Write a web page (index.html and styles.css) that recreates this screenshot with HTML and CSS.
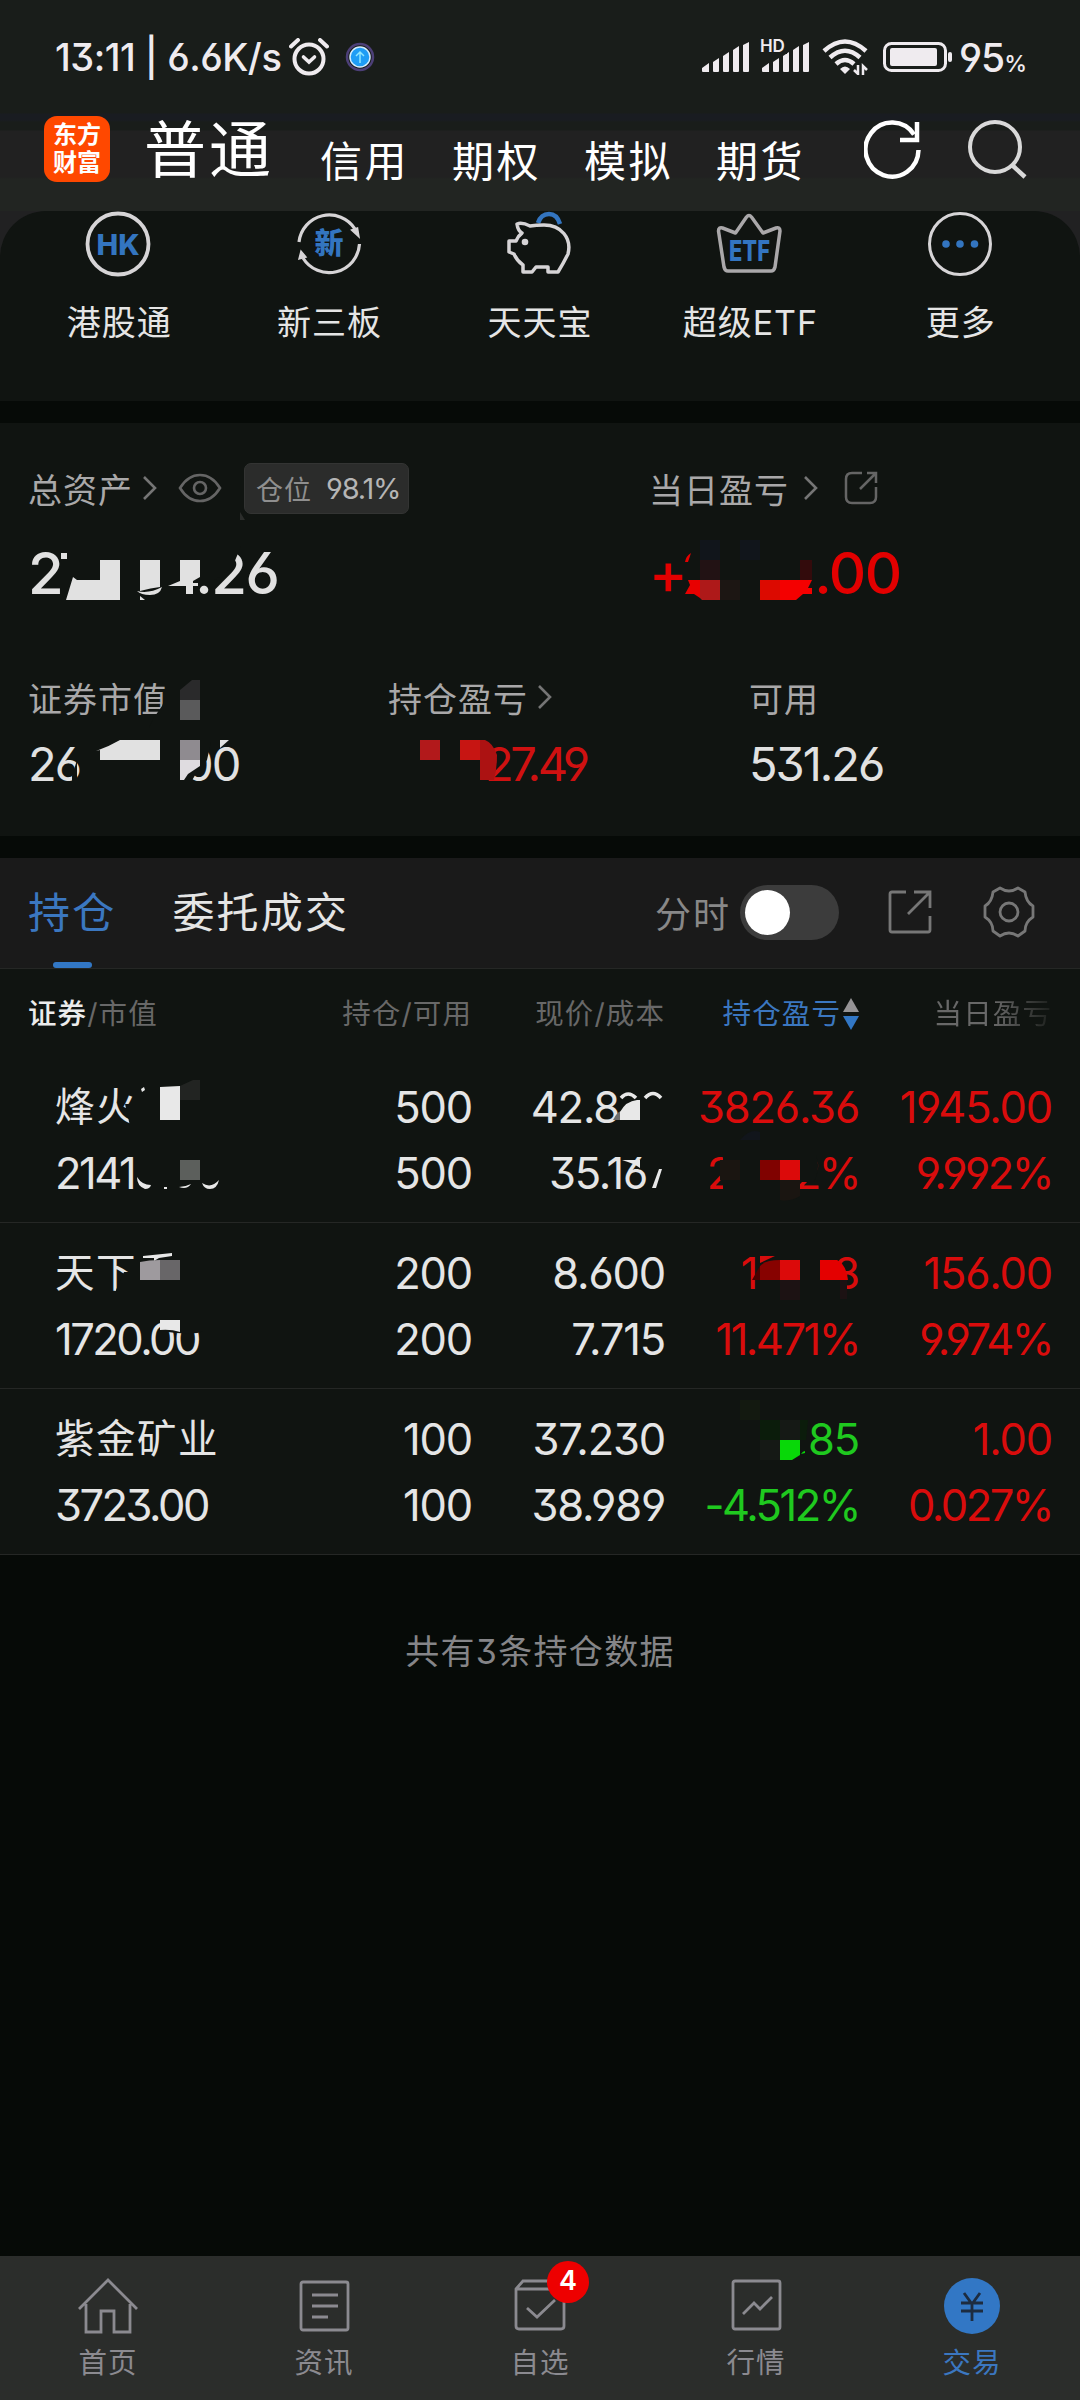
FILE: index.html
```html
<!DOCTYPE html>
<html lang="zh-CN">
  <head>
    <meta charset="UTF-8" />
    <meta name="viewport" content="width=device-width, initial-scale=1.0" />
    <title>交易</title>
    <link rel="stylesheet" href="styles.css">
  </head>

  <body>
    <div class="top">
      <div class="status-bar">
        <span class="status-time">13:11 | 6.6K/s</span>
        <svg class="alarm" width="40" height="38" viewBox="0 0 40 38" fill="none" stroke="#efebef" stroke-linecap="round">
          <circle cx="20" cy="21" r="14.500" stroke-width="4" />
          <path d="M14.500 19l5.500 5 5.500-5" stroke-width="3.600" />
          <path d="M2 8.500l7-6.500M38 8.500l-7-6.500" stroke-width="4" />
        </svg>
        <svg class="upload" width="30" height="32" viewBox="0 0 30 32" fill="none">
          <circle cx="15" cy="16" r="13" stroke="#4c3f77" stroke-width="2.500" />
          <circle cx="15" cy="16" r="10" fill="#1f9df5" stroke="#d6edff" stroke-width="1.500" />
          <path d="M15 22V11M11 15l4-4 4 4" stroke="#8fe6ff" stroke-width="1.500" />
        </svg>
        <div class="status-right">
          <svg width="48" height="32" viewBox="0 0 48 32" fill="#efebef">
            <path d="M0 27l7-5v9H1q-1 0-1-1zM11 21l6-4v13q0 1-1 1h-4q-1 0-1-1zM21 15l6-4v19q0 1-1 1h-4q-1 0-1-1zM31 9l6-4v25q0 1-1 1h-4q-1 0-1-1zM41 4l6-3v29q0 1-1 1h-4q-1 0-1-1z" />
          </svg>
          <div class="hd-signal">
            <span class="hd">HD</span>
            <svg width="48" height="32" viewBox="0 0 48 32" fill="#efebef">
              <path d="M0 27l7-5v9H1q-1 0-1-1zM11 21l6-4v13q0 1-1 1h-4q-1 0-1-1zM21 15l6-4v19q0 1-1 1h-4q-1 0-1-1zM31 9l6-4v25q0 1-1 1h-4q-1 0-1-1zM41 4l6-3v29q0 1-1 1h-4q-1 0-1-1z" />
            </svg>
          </div>
          <svg class="wifi" width="48" height="36" viewBox="0 0 48 36" fill="none" stroke="#efebef" stroke-width="4.500">
            <path d="M2 12Q23-7 44 12M8 18.500Q23 5 38 18.500M14 25Q23 17 32 25" />
            <path d="M23 35l-5-5q5-5 10 0z" fill="#efebef" stroke="none" />
            <path d="M36 26v9l-4-4M41 36v-9l4 4" stroke-width="2.500" />
          </svg>
          <svg class="battery" width="70" height="30" viewBox="0 0 70 30" fill="none">
            <rect x="1.500" y="1.500" width="61" height="27" rx="7" stroke="#efebef" stroke-width="3" />
            <rect x="7" y="6" width="47" height="18" rx="2" fill="#efebef" />
            <rect x="65" y="10" width="4" height="10" rx="2" fill="#efebef" />
          </svg>
          <span class="percent">95<small>%</small></span>
        </div>
      </div>

      <div class="header">
        <div class="logo"><span>东方</span><span>财富</span></div>
        <div class="account-tab active">普通</div>
        <div class="account-tab">信用</div>
        <div class="account-tab">期权</div>
        <div class="account-tab">模拟</div>
        <div class="account-tab">期货</div>
        <svg class="refresh" width="58" height="60" viewBox="0 0 58 60" fill="none" stroke="#fff" stroke-width="4.500">
          <path d="M54.500 31A26.500 27 0 1 1 50 15.500" />
          <path d="M53 3v18H36" />
        </svg>
        <svg width="60" height="60" viewBox="0 0 60 60" fill="none" stroke="#d9d9d9" stroke-width="4">
          <circle cx="27" cy="28" r="25" />
          <path d="M44 46l13 12" stroke-width="4.500" />
        </svg>
      </div>
    </div>

    <div class="shortcuts-wrap">
      <div class="shortcuts">
        <div class="shortcut">
          <svg width="66" height="66" viewBox="0 0 66 66">
            <circle cx="33" cy="33" r="30.500" fill="none" stroke="#d6d4d6" stroke-width="3.800" />
            <text x="33" y="43.500" class="icon-text" font-size="29">HK</text>
          </svg>
          <span>港股通</span>
        </div>
        <div class="shortcut">
          <svg width="66" height="66" viewBox="0 0 66 66" fill="none" stroke="#d6d4d6" stroke-width="3.200">
            <path d="M3 31A30.500 30.500 0 0 1 59 18M63.500 33A30.500 30.500 0 0 1 7 47" />
            <path d="M55.500 19l6-2 1.500 9zM3 48l2-8 5 6z" fill="#d6d4d6" stroke-width="1.500" />
            <text x="33" y="43" class="icon-text" font-size="29">新</text>
          </svg>
          <span>新三板</span>
        </div>
        <div class="shortcut">
          <svg width="66" height="66" viewBox="0 0 66 66" fill="none" stroke="#d6d4d6" stroke-width="3.500" stroke-linejoin="round">
            <path d="M32 12q3-9 11-9t11 10" stroke="#3375c0" stroke-width="4.500" />
            <path d="M24 15Q16 11 11 13q1 7 5 9-4 3-6 8H3v11l5 2q3 7 9 11v7h9l4-5h12v5h10q5-8 10-18C66 27 55 14 38 14q-8 0-14 1z" />
            <circle cx="19" cy="31" r="3.300" fill="#d6d4d6" stroke="none" />
          </svg>
          <span>天天宝</span>
        </div>
        <div class="shortcut">
          <svg width="66" height="66" viewBox="0 0 66 66" fill="none" stroke="#aaa8aa" stroke-width="3.500" stroke-linejoin="round">
            <path d="M8 56L2.500 20q0-4 4-3l13 5L30.500 6q2.500-3 5 0L47 22l13-5q4-1 4 3l-5 36q-1 4-4 4H12q-3 0-4-4z" />
            <text x="33.500" y="50" class="icon-text" textLength="41" lengthAdjust="spacingAndGlyphs" font-size="29">ETF</text>
          </svg>
          <span>超级ETF</span>
        </div>
        <div class="shortcut">
          <svg width="66" height="66" viewBox="0 0 66 66">
            <circle cx="33" cy="33" r="30.500" fill="none" stroke="#d6d4d6" stroke-width="3" />
            <g fill="#3375c0">
              <circle cx="19" cy="33" r="3.800" />
              <circle cx="33" cy="33" r="3.800" />
              <circle cx="47.500" cy="33" r="3.800" />
            </g>
          </svg>
          <span>更多</span>
        </div>
      </div>
    </div>

    <div class="assets">
      <div class="assets-main">
        <div class="asset-total">
          <div class="asset-label">
            总资产
            <svg class="chevron" width="15" height="24" viewBox="0 0 15 24"><path d="M2 1l11 11L2 23" /></svg>
            <svg class="eye" width="44" height="30" viewBox="0 0 44 30" fill="none" stroke="#656565" stroke-width="2.600">
              <path d="M2 15Q10 2 22 2t20 13Q34 28 22 28T2 15z" />
              <circle cx="22" cy="15" r="6" />
            </svg>
            <span class="position">仓位 <b>98.1%</b></span>
          </div>
          <div class="asset-big"><span>2</span><i class="gap gap-total"></i><span>.26</span></div>
        </div>
        <div class="asset-day">
          <div class="asset-label">
            当日盈亏
            <svg class="chevron" width="15" height="24" viewBox="0 0 15 24"><path d="M2 1l11 11L2 23" /></svg>
            <svg class="share-small" width="34" height="34" viewBox="0 0 34 34" fill="none" stroke="#656565" stroke-width="2.500">
              <path d="M18 2H8Q2 2 2 8v18q0 6 6 6h18q6 0 6-6V16" />
              <path d="M23 2h9v10M31 3L16 18" />
            </svg>
          </div>
          <div class="asset-big red"><span>+</span><i class="gap gap-day"></i><span>.00</span></div>
        </div>
      </div>
      <div class="assets-sub">
        <div>
          <div class="asset-label">证券市值</div>
          <div class="asset-value"><span>26</span><i class="gap gap-market"></i><span>00</span></div>
        </div>
        <div>
          <div class="asset-label">
            持仓盈亏
            <svg class="chevron" width="15" height="24" viewBox="0 0 15 24"><path d="M2 1l11 11L2 23" /></svg>
          </div>
          <div class="asset-value red"><i class="gap gap-profit"></i><span>27.49</span></div>
        </div>
        <div>
          <div class="asset-label">可用</div>
          <div class="asset-value available">531.26</div>
        </div>
      </div>
    </div>

    <div class="tabs">
      <div class="tab active">持仓</div>
      <div class="tab">委托成交</div>
      <div class="tab-tools">
        <span>分时</span>
        <div class="switch"></div>
        <svg class="share" width="44" height="44" viewBox="0 0 44 44" fill="none" stroke="#777" stroke-width="2.800">
          <path d="M18 2H4Q2 2 2 4v36q0 2 2 2h36q2 0 2-2V26" />
          <path d="M26 2h16v16M41 3L20 24" />
        </svg>
        <svg width="52" height="52" viewBox="0 0 52 52" fill="none" stroke="#777" stroke-width="2.800" stroke-linejoin="round">
          <path d="M17 2q9 6 18 0l7 4q1 10 8 14v11q-8 5-8 14l-7 5q-9-6-18 0l-7-5q0-9-8-14V20q7-4 8-14z" />
          <circle cx="26" cy="26" r="9" />
        </svg>
      </div>
    </div>

    <div class="table">
      <div class="row head">
        <div><em>证券</em>/市值</div>
        <div>持仓/可用</div>
        <div>现价/成本</div>
        <div class="sorted">
          持仓盈亏
          <svg width="16" height="34" viewBox="0 0 16 34"><path d="M8 1l8 14H0z" fill="#969496" /><path d="M8 33l8-14H0z" fill="#3277c5" /></svg>
        </div>
        <div class="fade">当日盈亏</div>
      </div>
      <div class="row">
        <div><p>烽火</p><p>2141</p></div>
        <div><p>500</p><p>500</p></div>
        <div><p>42.8<i class="gap gap-price"></i></p><p>35.16<i class="gap gap-cost"></i></p></div>
        <div class="red"><p>3826.36</p><p>2<i class="gap gap-rate"></i>2%</p></div>
        <div class="red"><p>1945.00</p><p>9.992%</p></div>
      </div>
      <div class="row">
        <div><p>天下</p><p>1720.00</p></div>
        <div><p>200</p><p>200</p></div>
        <div><p>8.600</p><p>7.715</p></div>
        <div class="red"><p>1<i class="gap gap-gain"></i>8</p><p>11.471%</p></div>
        <div class="red"><p>156.00</p><p>9.974%</p></div>
      </div>
      <div class="row">
        <div><p>紫金矿业</p><p>3723.00</p></div>
        <div><p>100</p><p>100</p></div>
        <div><p>37.230</p><p>38.989</p></div>
        <div class="green"><p>85</p><p>-4.512%</p></div>
        <div class="red"><p>1.00</p><p>0.027%</p></div>
      </div>
    </div>

    <div class="summary">共有3条持仓数据</div>

    <div class="nav">
      <div class="nav-item">
        <svg width="60" height="60" viewBox="0 0 60 60"><path d="M1 33L30 4l29 29M8 28v28h15V35h13v21h16V28" /></svg>
        <span>首页</span>
      </div>
      <div class="nav-item">
        <svg width="60" height="60" viewBox="0 0 60 60"><rect x="7" y="6" width="47" height="48" rx="2" /><path d="M18 19h26M18 30h26M18 41h16" /></svg>
        <span>资讯</span>
      </div>
      <div class="nav-item">
        <svg width="60" height="60" viewBox="0 0 60 60"><path d="M6 13l7-8h34l7 8v37q0 3-3 3H9q-3 0-3-3zM6 13h48M17 32l10 9 18-17" /></svg>
        <span>自选</span>
        <div class="badge">4</div>
      </div>
      <div class="nav-item">
        <svg width="60" height="60" viewBox="0 0 60 60"><rect x="7" y="5" width="47" height="48" rx="2" /><path d="M17 38l11-11 6 6 12-12" /></svg>
        <span>行情</span>
      </div>
      <div class="nav-item active">
        <svg width="60" height="60" viewBox="0 0 60 60"><circle cx="30" cy="30" r="28" /><path d="M22 17l8 11 8-11M19 27h22M19 35h22M30 27v18" /></svg>
        <span>交易</span>
      </div>
    </div>

    <!-- 隐私马赛克 -->
    <svg class="mosaic" width="1080" height="2400" viewBox="0 0 1080 2400">
      <!-- 资产 -->
      <g fill="#e1e1e1">
        <path fill="#101411" d="M212 546h29l-9 22-20 14z" />
        <path fill="#2b2d2b" d="M240 512l5 8h-5z" />
        <path d="M61 553h6v6h-6zM66 600l7-23 4 3h23v-20h20v40zM140 560h20v27q-9 1-20 4zM137 591q12 3 25-4-2 8-12 8-9 0-13-4zM140 596l5 4h-5zM180 560h20v17l-7 4v2h5v3h-5v8h-7v-8h-18l12-5z" />
        <path fill="#101411" d="M162 706l3-8h6v30h-22l4-9z" />
        <path fill="#2a2a2b" d="M180 690l12-10h8v20h-20z" />
        <path fill="#5a5a5b" d="M180 700h20v20h-20z" />
        <path fill="#101411" d="M72 776l5-16v22h-5zM183 742h28l-4 18-9 10-8 14h-7z" />
        <path d="M96 751q12-4 24-11h40v20h-60v-10zM220 740h9l-9 8z" />
        <path fill="#8f8b90" d="M180 740h20v20h-20z" />
        <path fill="#dfdce0" d="M180 760h20v6l-12 8-4 6h-4z" />
      </g>
      <g>
        <path fill="#11151b" d="M700 540h20v20h-20zM740 540h20v20h-20z" />
        <path fill="#221214" d="M700 560h20v20h-20z" />
        <path fill="#e80000" d="M685 562q1-6 6-9l-3 9zM685 594l5-9-2-5h12v18l-6-4z" />
        <path fill="#ae1919" d="M700 580h20v20h-18l-2-2z" />
        <path fill="#1c1613" d="M720 580h20v20h-20z" />
        <path fill="#330b0c" d="M800 560h12v20h-12z" />
        <path fill="#dc0a00" d="M760 580h20v20h-20z" />
        <path fill="#f40000" d="M780 580h32l-4 8h4v6h-9l-7 6h-16z" />
        <path fill="#b2191b" d="M420 740h20v20h-20z" />
        <path fill="#c71512" d="M460 740h20v20h-20z" />
        <path fill="#ac1212" d="M480 740h5q8 3 12 15 0 14-3 25h-14z" />
      </g>
      <!-- 烽火 -->
      <g>
        <path fill="#101411" d="M125 1104h12v22h-7z" />
        <path fill="#e8e8e8" d="M141 1089l3-2 1 3-3 2zM160 1087l20-1v34h-20z" />
        <path fill="#222422" d="M180 1086l13-6h7v20h-20z" />
        <path fill="#5c5f5c" d="M180 1160h20v20h-20z" />
        <path fill="#e8e8e8" d="M137 1177q5 8 14 8-1 4-6 4-8-3-8-12zM164 1187h3v2h-3zM179 1187q6 0 12-3-4 6-12 3zM202 1183q9 6 17-3-2 9-9 9-6 0-8-6zM652 1188h4l6-19h-3z" />
        <path fill="none" stroke="#e8e8e8" stroke-width="3.500" d="M621 1098q7-8 15 0M645 1098q8-9 16 0" />
        <path fill="#6d6d6d" d="M613 1120q4-8 8-9v9z" />
        <path fill="#e8e8e8" d="M620 1120v-8q6-11 17-12h3v20zM622 1160h18v8q-7-5-18-8z" />
        <path fill="#11151b" d="M740 1140q10-12 20-8v8z" />
        <path fill="#101411" d="M723 1155h20v36h-20zM796 1155h20q5 12-2 27h-18z" />
        <path fill="#1a1511" d="M720 1160h20v20h-20zM780 1180h20v16q-10 6-20 4z" />
        <path fill="#800200" d="M760 1160h20v20h-20z" />
        <path fill="#dc0a0a" d="M780 1160h20v20h-20z" />
      </g>
      <!-- 天下 -->
      <g>
        <path fill="#101411" d="M124 1272h16v26h-24v-8zM160 1320h43v11q-8 5-43 0z" />
        <path fill="#e8e8e8" d="M143 1256l29-3v3l-13 2-5 3v-3h-11zM160 1320h20v12q-9-3-20-2z" />
        <path fill="#9e9a9e" d="M140 1262q9-2 20-2v20h-20z" />
        <path fill="#686668" d="M160 1260h20v20h-20z" />
        <path fill="#4a0000" d="M752 1280l8-14v14z" />
        <path fill="#d60d0d" d="M760 1256h15l-15 7z" />
        <path fill="#870200" d="M760 1266q5-6 20-6v20h-20z" />
        <path fill="#dc0a0a" d="M780 1260h20v20h-20z" />
        <path fill="#101411" d="M834 1280h13v14h-13z" />
        <path fill="#1c1213" d="M780 1280h20v20h-20zM840 1280h7v19h-7z" />
        <path fill="#e40000" d="M820 1260h17q9 4 11 20h-28z" />
      </g>
      <!-- 紫金矿业 -->
      <g>
        <path fill="#131910" d="M740 1400h20v20h-20z" />
        <path fill="#0b1c0b" d="M760 1420h20v20h-20zM800 1420h8l-2 20h-6z" />
        <path fill="#151915" d="M780 1420h20v20h-20zM760 1440h20v20h-20z" />
        <path fill="#08d808" d="M780 1440h20v15l-8 5h-12zM801 1454q2-3 4-3v2z" />
      </g>
    </svg>
  </body>
</html>
```
FILE: styles.css
```css
* {
  margin: 0;
  padding: 0;
  box-sizing: border-box;
}

body {
  position: relative;
  width: 1080px;
  height: 2400px;
  display: flex;
  flex-direction: column;
  overflow: hidden;
  background-color: #060a07;
  color: #e5e5e5;
  font-family: Inter, "Noto Sans CJK SC", sans-serif;
  font-weight: 400;
  font-feature-settings: "cv03", "cv04", "cv09";
  white-space: nowrap;
}

svg {
  display: block;
  flex-shrink: 0;
}

i,
em {
  font-style: normal;
}

.red {
  color: #d90c0c;
}

.green {
  color: #1fc91f;
}

/* 顶部 */
.top {
  height: 211px;
  background: linear-gradient(#191d1a 113px, #191c21 114px, #191c21 120px, #191d1a 122px, #191d1a 130px, #212121 131px, #212121 177px, #222522 179px);
}

.status-bar {
  display: flex;
  align-items: center;
  height: 114px;
  padding: 0 54px 0 55px;
  color: #efebef;
}

.status-time {
  width: 227px;
  font-size: 38px;
  font-weight: 500;
  letter-spacing: -0.5px;
}

.alarm {
  margin-left: 7px;
}

.upload {
  margin-left: 16px;
}

.status-right {
  display: flex;
  align-items: center;
  margin-left: auto;
}

.hd-signal {
  position: relative;
  margin-left: 12px;
}

.hd {
  position: absolute;
  left: -2px;
  top: -2px;
  padding-right: 2px;
  background-color: #191d1a;
  font-size: 17px;
  line-height: 15px;
  font-weight: 600;
}

.wifi {
  margin-left: 12px;
}

.battery {
  margin-left: 13px;
}

.percent {
  margin-left: 6px;
  font-size: 39px;
  font-weight: 500;
  letter-spacing: -1px;
}

.percent small {
  font-size: 23px;
}

.header {
  display: flex;
  height: 97px;
  padding-left: 44px;
  color: #fff;
}

.logo {
  display: flex;
  flex-direction: column;
  align-items: center;
  width: 66px;
  height: 66px;
  margin: 2px 34px 0 0;
  padding-top: 5px;
  border-radius: 13px;
  background-color: #ff4800;
  font-size: 24px;
  line-height: 28px;
  font-weight: 700;
}

.account-tab {
  width: 132px;
  padding-top: 19px;
  font-size: 42px;
  line-height: 58px;
  letter-spacing: 2.5px;
}

.account-tab.active {
  width: 176px;
  padding-top: 2px;
  font-size: 62px;
  line-height: 70px;
  letter-spacing: 3px;
}

.refresh {
  margin: 0 46px 0 16px;
}

.header > svg {
  margin-top: 5px;
}

/* 快捷入口 */
.shortcuts-wrap {
  background-color: #212122;
}

.shortcuts {
  display: grid;
  grid-template-columns: repeat(5, 1fr);
  height: 190px;
  padding: 0 15px 0 13px;
  border-radius: 46px 46px 0 0;
  background-color: #101411;
}

.shortcut {
  display: flex;
  flex-direction: column;
  align-items: center;
  font-size: 34px;
  line-height: 50px;
  letter-spacing: 1px;
}

.shortcut span {
  margin: 21px 0 0 2px;
}

.icon-text {
  fill: #3375c0;
  stroke: none;
  font-weight: 800;
  letter-spacing: 0;
  text-anchor: middle;
}

/* 资产 */
.assets {
  height: 413px;
  margin-top: 22px;
  padding: 40px 29px 0 28px;
  background-color: #101411;
}

.assets-main {
  display: grid;
  grid-template-columns: 621px 1fr;
}

.asset-label {
  display: flex;
  align-items: center;
  height: 50px;
  color: #a9a8a9;
  font-size: 34px;
  letter-spacing: 1px;
}

.chevron {
  margin-left: 9px;
  fill: none;
  stroke: #757575;
  stroke-width: 2.6;
}

.asset-day .chevron {
  margin-left: 14px;
}

.eye {
  margin-left: 21px;
}

.share-small {
  margin-left: 26px;
}

.position {
  display: flex;
  align-items: center;
  width: 165px;
  height: 51px;
  margin-left: 22px;
  padding-left: 11px;
  border: 1px solid #333433;
  border-radius: 7px;
  background-color: #2b2c2b;
  color: #8f8f8f;
  font-size: 27px;
}

.position b {
  margin-left: 14px;
  color: #b5b5b5;
  font-size: 29px;
  font-weight: 400;
  letter-spacing: -1.2px;
}

.asset-big {
  display: flex;
  height: 90px;
  align-items: center;
  margin-top: 15px;
  color: #e1e1e1;
  font-size: 58px;
  font-weight: 500;
  letter-spacing: -1.5px;
}

.asset-big.red {
  color: #e30000;
}

.gap {
  display: inline-block;
}

.gap-total {
  width: 133px;
}

.gap-day {
  width: 128px;
}

.gap-market {
  width: 104px;
}

.gap-profit {
  width: 97px;
}

.gap-price {
  width: 46px;
}

.gap-cost {
  width: 18px;
}

.gap-rate {
  width: 64px;
}

.gap-gain {
  width: 76px;
}

.assets-sub {
  display: grid;
  grid-template-columns: 360px 361px 1fr;
  margin-top: 54px;
}

.asset-value {
  display: flex;
  align-items: center;
  height: 58px;
  margin-top: 12px;
  color: #e1e1e1;
  font-size: 47px;
  letter-spacing: -2px;
}

.asset-value.red {
  color: #cf1111;
  letter-spacing: -3.4px;
}

/* 持仓标签栏 */
.tabs {
  display: flex;
  height: 111px;
  margin-top: 22px;
  padding: 0 45px 0 28px;
  border-bottom: 1px solid #252725;
  background-color: #1a1a1a;
}

.tab {
  position: relative;
  margin-right: 56px;
  font-size: 42px;
  line-height: 110px;
  letter-spacing: 2.2px;
}

.tab.active {
  color: #3b77c0;
}

.tab.active::after {
  content: "";
  position: absolute;
  left: 25px;
  bottom: 0;
  width: 39px;
  height: 6px;
  border-radius: 3px;
  background-color: #3277c5;
}

.tab-tools {
  display: flex;
  align-items: center;
  height: 108px;
  margin-left: auto;
  color: #888;
  font-size: 36px;
  letter-spacing: 2px;
}

.switch {
  width: 99px;
  height: 55px;
  margin-left: 9px;
  padding: 5px;
  border-radius: 28px;
  background-color: #3c3c3c;
}

.switch::before {
  content: "";
  display: block;
  width: 45px;
  height: 45px;
  border-radius: 50%;
  background-color: #fff;
}

.share {
  margin: 0 51px 0 49px;
}

/* 持仓列表 */
.table {
  background-color: #101411;
}

.row {
  display: grid;
  grid-template-columns: 300px 172px 193px 194px 193px;
  height: 166px;
  padding: 17px 0 0;
  border-bottom: 1px solid #252725;
  font-size: 43.5px;
  letter-spacing: -1.2px;
  text-align: right;
}

.row > div:first-child {
  padding-left: 55px;
  text-align: left;
}

.row p {
  height: 66px;
  line-height: 66px;
}

.row > div:first-child p:first-child {
  font-size: 39.5px;
  letter-spacing: 1.5px;
}

.row > div:first-child p:last-child,
.row > .red p:last-child,
.row > .green p:last-child {
  letter-spacing: -2.5px;
}

.row.head {
  height: 88px;
  padding-top: 25px;
  border-bottom: none;
  color: #686868;
  font-size: 28.5px;
  line-height: 40px;
  letter-spacing: 1.1px;
}

.row.head > div:first-child {
  padding-left: 28px;
}

.head em {
  color: #ececec;
  font-weight: 500;
}

.head .sorted {
  display: flex;
  align-items: center;
  justify-content: flex-end;
  gap: 2px;
  height: 40px;
  color: #3b77c0;
}

.head .fade {
  background: linear-gradient(to right, #686868 70%, #1c1f1c);
  background-clip: text;
  -webkit-background-clip: text;
  color: transparent;
}

.summary {
  margin-top: 72px;
  color: #858588;
  font-size: 34px;
  line-height: 50px;
  letter-spacing: 1.3px;
  text-align: center;
}

/* 底部导航 */
.nav {
  display: flex;
  height: 144px;
  margin-top: auto;
  background-color: #2b2d2b;
}

.nav-item {
  position: relative;
  display: flex;
  flex: 1;
  flex-direction: column;
  align-items: center;
  padding: 20px 1px 0 0;
  color: #8b8a90;
  font-size: 28.5px;
  line-height: 40px;
  letter-spacing: 1px;
}

.nav-item span {
  margin: 7px 0 0 1px;
}

.nav-item svg {
  fill: none;
  stroke: #8b8a90;
  stroke-width: 2.8;
}

.nav-item.active {
  color: #3b77c0;
}

.nav-item.active svg {
  stroke: #1d2c40;
}

.nav-item.active circle {
  fill: #3277c5;
  stroke: none;
}

.badge {
  position: absolute;
  left: 115px;
  top: 5px;
  width: 42px;
  height: 42px;
  border-radius: 50%;
  background-color: #ee0000;
  color: #fff;
  font-size: 27px;
  line-height: 39px;
  font-weight: 600;
  letter-spacing: 0;
  text-align: center;
}

.mosaic {
  position: absolute;
  left: 0;
  top: 0;
  pointer-events: none;
}
```
